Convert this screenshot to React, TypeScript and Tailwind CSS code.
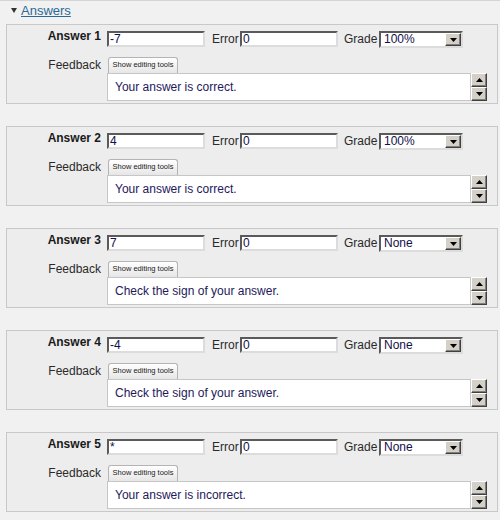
import React from "react";

const answers = [
  { n: 1, val: "-7", grade: "100%", fb: "Your answer is correct." },
  { n: 2, val: "4", grade: "100%", fb: "Your answer is correct." },
  { n: 3, val: "7", grade: "None", fb: "Check the sign of your answer." },
  { n: 4, val: "-4", grade: "None", fb: "Check the sign of your answer." },
  { n: 5, val: "*", grade: "None", fb: "Your answer is incorrect." },
];

function Btn3D({ up, className }: { up: boolean; className: string }) {
  return (
    <div
      className={
        "flex items-center justify-center bg-[#d4d0c8] border border-t-[#ffffff] border-l-[#ffffff] border-b-[#404040] border-r-[#404040] shadow-[inset_-1px_-1px_0_#808080] " +
        className
      }
    >
      <svg width="7" height="4" viewBox="0 0 7 4">
        {up ? <polygon points="3.5,0 7,4 0,4" fill="#000" /> : <polygon points="0,0 7,0 3.5,4" fill="#000" />}
      </svg>
    </div>
  );
}

function TextInput({ value, w }: { value: string; w: string }) {
  return (
    <div
      className={
        "h-[16px] bg-white border-2 border-t-[#5a5a5a] border-l-[#5a5a5a] border-b-[#dcdcdc] border-r-[#dcdcdc] pl-[1px] text-[12px] leading-[12px] text-[#10104a] flex items-center " +
        w
      }
    >
      {value}
    </div>
  );
}

function AnswerBox({ n, val, grade, fb }: { n: number; val: string; grade: string; fb: string }) {
  return (
    <div className="ml-[6px] w-[492px] h-[80px] border border-[#c8c8c8] bg-[#ededed] pt-[6px]">
      <div className="flex items-start h-[17px]">
        <div className="w-[94px] text-right font-bold text-[12px] leading-[14px] mt-[-2px] text-[#1a1a1a]">
          Answer {n}
        </div>
        <div className="ml-[6px]">
          <TextInput value={val} w="w-[98px]" />
        </div>
        <div className="ml-[7px] w-[28px] text-[12px] leading-[16px] text-[#2a2a2a]">Error</div>
        <TextInput value="0" w="w-[98px]" />
        <div className="ml-[6px] w-[35px] text-[12px] leading-[16px] text-[#2a2a2a]">Grade</div>
        <div className="w-[84px] h-[17px] bg-white border-2 border-t-[#5a5a5a] border-l-[#5a5a5a] border-b-[#dcdcdc] border-r-[#dcdcdc] flex items-center">
          <div className="flex-1 pl-[3px] text-[12px] leading-[13px] text-[#14104a]">{grade}</div>
          <Btn3D up={false} className="w-[16px] h-[13px]" />
        </div>
      </div>
      <div className="flex items-start mt-[9px]">
        <div className="w-[94px] text-right text-[12px] leading-[14px] pt-[1px] text-[#2a2a2a]">Feedback</div>
        <div className="ml-[6px] flex flex-col">
          <div className="ml-[1px] w-[70px] h-[16px] border border-b-0 border-[#b4b4b4] rounded-t-[3px] bg-gradient-to-b from-[#ffffff] to-[#e6e6e6] text-[7.5px] leading-[14px] text-center text-[#1a1a1a]">
            Show editing tools
          </div>
          <div className="flex">
            <div className="w-[364px] h-[28px] bg-white border border-[#c6c6c6] pl-[7px] text-[12px] leading-[26px] text-[#24195a]">
              {fb}
            </div>
            <div className="flex flex-col">
              <Btn3D up={true} className="w-[16px] h-[14px]" />
              <Btn3D up={false} className="w-[16px] h-[14px]" />
            </div>
          </div>
        </div>
      </div>
    </div>
  );
}

export default function App() {
  return (
    <div className="w-[500px] h-[520px] bg-[#f1f1f1] border-t border-[#d4d4d4] font-['Liberation_Sans',Arial,sans-serif] overflow-hidden">
      <div className="h-[23px] flex items-start pt-[2px]">
        <svg width="6" height="5" viewBox="0 0 6 5" className="ml-[11px] mt-[5px]">
          <polygon points="0,0 6,0 3,5" fill="#333" />
        </svg>
        <span className="ml-[4px] text-[13px] leading-[15px] text-[#2d6896] underline">Answers</span>
      </div>
      <div className="flex flex-col gap-[22px]">
        {answers.map((a) => (
          <AnswerBox key={a.n} {...a} />
        ))}
      </div>
    </div>
  );
}
